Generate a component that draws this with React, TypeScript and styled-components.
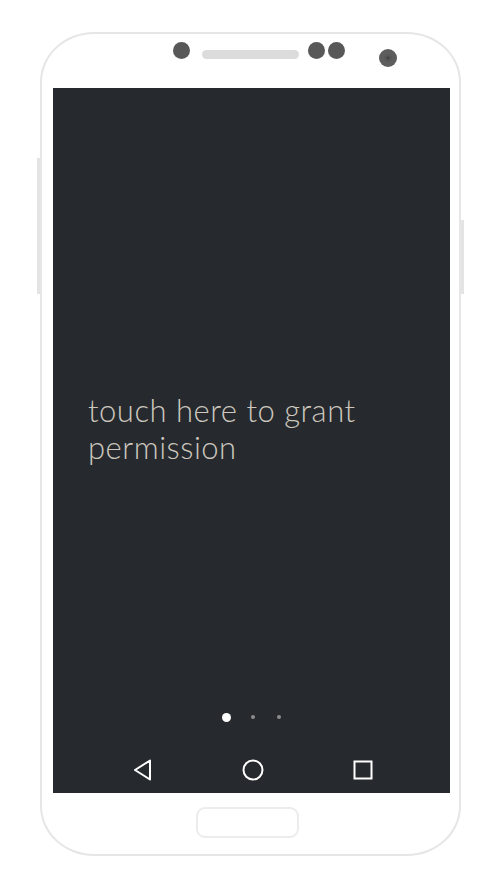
import React from "react";
import styled, { createGlobalStyle } from "styled-components";

const Global = createGlobalStyle`
  html, body { margin: 0; padding: 0; background: #ffffff; }
  body { width: 500px; height: 889px; overflow: hidden; }
  * { box-sizing: border-box; }
`;

const Page = styled.div`
  padding: 32px 0 0 40px;
`;

const Phone = styled.div`
  position: relative;
  width: 421px;
  height: 824px;
  border: 2px solid #e6e6e6;
  border-radius: 54px / 50px;
  background: #ffffff;
  display: flex;
  flex-direction: column;
`;

const SideKey = styled.div<{ $side: "left" | "right"; $top: number; $h: number }>`
  position: absolute;
  top: ${(p) => p.$top}px;
  ${(p) => (p.$side === "left" ? "left: -5px;" : "right: -5px;")}
  width: 3px;
  height: ${(p) => p.$h}px;
  background: #e4e4e4;
`;

const TopBezel = styled.div`
  height: 54px;
  display: flex;
  align-items: flex-start;
  padding-left: 130.5px;
`;

const Sensor = styled.div<{ $gap: number }>`
  width: 17px;
  height: 17px;
  border-radius: 50%;
  background: #585858;
  margin-top: 7.5px;
  margin-left: ${(p) => p.$gap}px;
  flex: none;
`;

const Speaker = styled.div`
  width: 97px;
  height: 9px;
  border-radius: 5px;
  background: #dcdcdc;
  margin-top: 16px;
  margin-left: 12.5px;
  flex: none;
`;

const Camera = styled.div`
  width: 18px;
  height: 18px;
  border-radius: 50%;
  margin-top: 15px;
  margin-left: 34.5px;
  background: radial-gradient(circle, #454545 0 1px, #555555 2px, #5e5e5e 5px, #5a5a5a 100%);
  flex: none;
`;

const Screen = styled.div`
  margin-left: 11px;
  width: 397px;
  height: 705px;
  background: #262a2e;
  display: flex;
  flex-direction: column;
`;

const Content = styled.div`
  flex: 1;
  display: flex;
  align-items: center;
  padding: 70px 30px 0 35px;
`;

const Message = styled.p`
  margin: 0;
  font-family: "Lato", "Open Sans", sans-serif;
  font-weight: 300;
  font-size: 31px;
  line-height: 37px;
  color: #cdc7be;
  letter-spacing: 0.5px;
`;

const Dots = styled.div`
  height: 34px;
  display: flex;
  align-items: center;
  justify-content: center;
  padding-left: 2px;
`;

const Dot = styled.span<{ $active?: boolean }>`
  width: ${(p) => (p.$active ? 9 : 4)}px;
  height: ${(p) => (p.$active ? 9 : 4)}px;
  border-radius: 50%;
  background: ${(p) => (p.$active ? "#ffffff" : "#8c8c8c")};
  margin: 0 ${(p) => (p.$active ? 9 : 11)}px;
`;

const NavBar = styled.div`
  margin-top: 12px;
  height: 47px;
  display: flex;
  align-items: center;
  justify-content: center;
  gap: 88px;
  padding-left: 2px;
`;

const NavIcon = styled.svg`
  width: 22px;
  height: 22px;
  display: block;
`;

const BottomBezel = styled.div`
  flex: 1;
  display: flex;
  justify-content: center;
  padding-top: 14px;
  padding-right: 6px;
`;

const HomeKey = styled.div`
  width: 103px;
  height: 31px;
  border: 2px solid #ececec;
  border-radius: 9px;
`;

export default function App() {
  return (
    <Page>
      <Global />
      <Phone>
        <SideKey $side="left" $top={124} $h={136} />
        <SideKey $side="right" $top={186} $h={74} />
        <TopBezel>
          <Sensor $gap={0} />
          <Speaker />
          <Sensor $gap={8.5} />
          <Sensor $gap={3} />
          <Camera />
        </TopBezel>
        <Screen>
          <Content>
            <Message>
              touch here to grant
              <br />
              permission
            </Message>
          </Content>
          <Dots>
            <Dot $active />
            <Dot />
            <Dot />
          </Dots>
          <NavBar>
            <NavIcon viewBox="0 0 22 22">
              <path d="M18 1.5 L3 11 L18 20.5 Z" fill="none" stroke="#ffffff" strokeWidth="2" strokeLinejoin="round" />
            </NavIcon>
            <NavIcon viewBox="0 0 22 22">
              <circle cx="11" cy="11" r="9.5" fill="none" stroke="#ffffff" strokeWidth="2" />
            </NavIcon>
            <NavIcon viewBox="0 0 22 22">
              <rect x="2.5" y="2.5" width="17" height="17" fill="none" stroke="#ffffff" strokeWidth="2" />
            </NavIcon>
          </NavBar>
        </Screen>
        <BottomBezel>
          <HomeKey />
        </BottomBezel>
      </Phone>
    </Page>
  );
}
